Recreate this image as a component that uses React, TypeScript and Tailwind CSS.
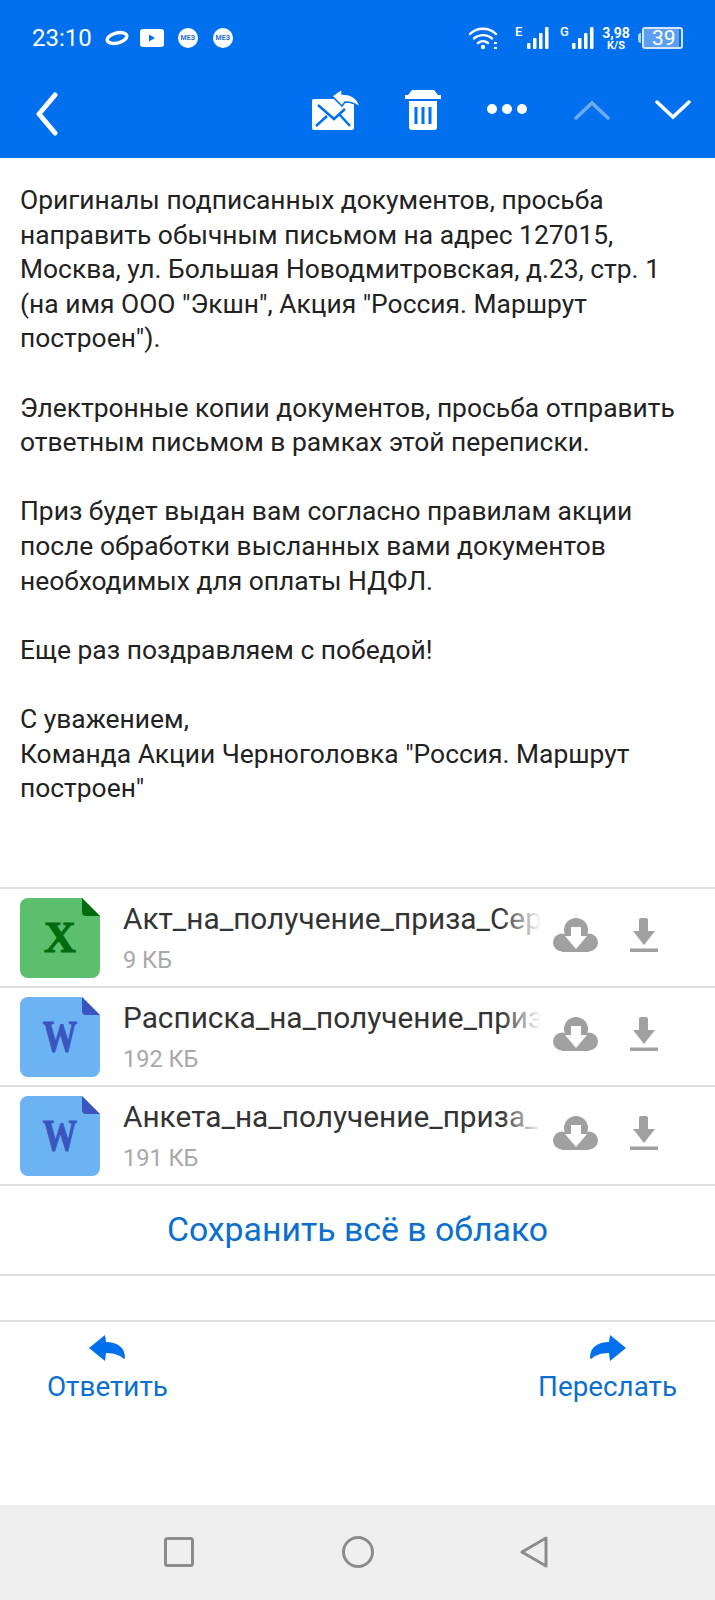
import React from "react";

const body = [
  ["Оригиналы подписанных документов, просьба", "направить обычным письмом на адрес 127015,", "Москва, ул. Большая Новодмитровская, д.23, стр. 1", "(на имя ООО \"Экшн\", Акция \"Россия. Маршрут", "построен\")."],
  ["Электронные копии документов, просьба отправить", "ответным письмом в рамках этой переписки."],
  ["Приз будет выдан вам согласно правилам акции", "после обработки высланных вами документов", "необходимых для оплаты НДФЛ."],
  ["Еще раз поздравляем с победой!"],
  ["С уважением,", "Команда Акции Черноголовка \"Россия. Маршрут", "построен\""],
];

const files = [
  { name: "Акт_на_получение_приза_Сергей", size: "9 КБ", kind: "x" },
  { name: "Расписка_на_получение_приза_Се", size: "192 КБ", kind: "w" },
  { name: "Анкета_на_получение_приза_Серг", size: "191 КБ", kind: "w" },
];

function FileIcon({ kind }: { kind: string }) {
  const bg = kind === "x" ? "#5cbf6e" : "#6bb3f3";
  const dark = kind === "x" ? "#006b0f" : "#3b55bf";
  return (
    <div className="relative h-[80px] w-[80px] shrink-0">
      <svg viewBox="0 0 80 80" className="h-full w-full">
        <path d="M8 0H62L80 18V72a8 8 0 0 1-8 8H8a8 8 0 0 1-8-8V8a8 8 0 0 1 8-8Z" fill={bg} />
        <path d="M62 0L80 18H66a4 4 0 0 1-4-4Z" fill={dark} />
      </svg>
      {kind === "x" ? (
        <span className="absolute inset-0 flex items-center justify-center pt-[1px] font-['Liberation_Serif',serif] text-[44px] leading-none font-bold text-[#006b0f] [-webkit-text-stroke:1px_#006b0f]">X</span>
      ) : (
        <span className="absolute inset-0 flex scale-x-[0.78] items-center justify-center pt-[1px] font-['Liberation_Serif',serif] text-[44px] leading-none font-bold text-[#3b55bf] [-webkit-text-stroke:1px_#3b55bf]">W</span>
      )}
    </div>
  );
}

function CloudIcon() {
  return (
    <svg viewBox="0 0 45 34" className="h-[34px] w-[45px]">
      <circle cx="9" cy="24.500" r="9" fill="#a0a0a0" />
      <circle cx="36" cy="24.500" r="9" fill="#a0a0a0" />
      <circle cx="23" cy="12" r="12" fill="#a0a0a0" />
      <rect x="9" y="16" width="27" height="18" fill="#a0a0a0" />
      <path d="M18 9H28V18H34L23 31L12 18H18Z" fill="#fff" />
    </svg>
  );
}

function SaveIcon() {
  return (
    <svg viewBox="0 0 28 34" className="h-[34px] w-[28px]">
      <path d="M9 2a2 2 0 0 1 2-2h5a2 2 0 0 1 2 2V13H25L14 27L3 13H9Z" fill="#a0a0a0" />
      <rect x="0" y="30.500" width="28" height="3.500" fill="#a0a0a0" />
    </svg>
  );
}

function ReplyIcon({ flip }: { flip?: boolean }) {
  return (
    <svg viewBox="0 0 36 26" className={`h-[26px] w-[36px] ${flip ? "-scale-x-100" : ""}`}>
      <path d="M16 0L17 7C28 7 36 12 36 23L35 24C32 21 26 18 17 18L16 26L0 13Z" fill="#0070ee" />
    </svg>
  );
}

function Signal({ letter, cls }: { letter: string; cls: string }) {
  return (
    <div className={`flex items-start ${cls}`}>
      <span className="mt-[-2px] w-[9px] text-[13px] leading-[14px] font-medium">{letter}</span>
      <svg viewBox="0 0 22 22" className="ml-[3px] h-[22px] w-[22px]">
        <rect x="0" y="16" width="3.500" height="6" rx="1" fill="#fff" />
        <rect x="6" y="11" width="3.500" height="11" rx="1" fill="#fff" />
        <rect x="12" y="6" width="3.500" height="16" rx="1" fill="#fff" />
        <rect x="18" y="0" width="3.500" height="22" rx="1" fill="#fff" />
      </svg>
    </div>
  );
}

function StatusBar() {
  return (
    <div className="flex h-[70px] items-center justify-between pt-[6px] pr-[32px] pl-[32px] text-white">
      <div className="flex items-center">
        <span className="text-[24px]">23:10</span>
        <svg viewBox="0 0 24 16" className="ml-[13px] h-[16px] w-[24px]">
          <ellipse cx="12" cy="8" rx="10" ry="5" transform="rotate(-14 12 8)" fill="none" stroke="#fff" strokeWidth="3.500" />
        </svg>
        <svg viewBox="0 0 24 18" className="ml-[11px] h-[18px] w-[24px]">
          <rect width="24" height="18" rx="3" fill="#fff" />
          <path d="M9 5.500L15 9L9 12.500Z" fill="#0070ee" />
        </svg>
        <div className="ml-[14px] flex h-[20px] w-[20px] items-center justify-center rounded-full bg-white text-[7px] font-bold text-[#2a6fd0]">МЕЗ</div>
        <div className="ml-[15px] flex h-[20px] w-[20px] items-center justify-center rounded-full bg-white text-[7px] font-bold text-[#2a6fd0]">МЕЗ</div>
      </div>
      <div className="flex items-center">
        <svg viewBox="0 0 30 24" className="h-[24px] w-[30px]">
          <path d="M1 8C8 1 20 1 27 8M5 12.500C10 8 18 8 23 12.500M9 17C12 14.500 16 14.500 19 17" fill="none" stroke="#fff" strokeWidth="2.400" strokeLinecap="round" />
          <circle cx="14" cy="21" r="2.200" fill="#fff" />
          <rect x="25" y="16" width="3" height="2" fill="#fff" />
          <rect x="25" y="21" width="3" height="2" fill="#fff" />
        </svg>
        <Signal letter="E" cls="ml-[16px]" />
        <Signal letter="G" cls="ml-[11px]" />
        <div className="ml-[8px] flex w-[28px] flex-col items-center text-[14px] leading-[14px] font-bold">
          <span>3,98</span>
          <span className="text-[11px] leading-[11px]">K/S</span>
        </div>
        <div className="ml-[8px] h-[10px] w-[3px] rounded-l-sm bg-white/70" />
        <div className="relative ml-[1px] flex h-[22px] w-[41px] items-center overflow-hidden rounded-[3px] border-2 border-[#d5e6fb] text-[21px]">
          <div className="h-full w-[35px] bg-[#5c9ff2]" />
          <span className="absolute left-[8px] leading-none">39</span>
        </div>
      </div>
    </div>
  );
}

function Toolbar() {
  return (
    <div className="flex h-[88px] items-start pt-[20px]">
      <svg viewBox="0 0 24 44" className="mt-[2px] ml-[35px] h-[44px] w-[24px]">
        <path d="M20 3L4 22L20 41" fill="none" stroke="#fff" strokeWidth="5" strokeLinecap="round" strokeLinejoin="round" />
      </svg>
      <svg viewBox="0 0 48 42" className="mt-[-1px] ml-[253px] h-[42px] w-[48px]">
        <rect x="0" y="10" width="42" height="31" rx="2" fill="#fff" />
        <path d="M6 16L22 30L33 20M4 37L15 27M28 26L38 37" fill="none" stroke="#0070ee" strokeWidth="2.500" />
        <path d="M20 7L30 0V5C40 5 47 10 48 19C44 14 38 13 33 13L30 17Z" fill="#fff" stroke="#0070ee" strokeWidth="1.500" />
      </svg>
      <svg viewBox="0 0 36 40" className="ml-[45px] h-[40px] w-[36px]">
        <path d="M7 0H29L33 5H36V9H0V5H3Z" fill="#fff" />
        <path d="M4 11H32V37a3 3 0 0 1-3 3H7a3 3 0 0 1-3-3Z" fill="#fff" />
        <path d="M11 17V34M18 17V34M25 17V34" stroke="#0070ee" strokeWidth="3" />
      </svg>
      <div className="mt-[14px] ml-[46px] flex gap-[5px]">
        <div className="h-[10px] w-[10px] rounded-full bg-white" />
        <div className="h-[10px] w-[10px] rounded-full bg-white" />
        <div className="h-[10px] w-[10px] rounded-full bg-white" />
      </div>
      <svg viewBox="0 0 36 20" className="mt-[10px] ml-[47px] h-[20px] w-[36px]">
        <path d="M2 18L18 3L34 18" fill="none" stroke="#6fa9f3" strokeWidth="3.500" strokeLinecap="round" />
      </svg>
      <svg viewBox="0 0 36 20" className="mt-[10px] ml-[45px] h-[20px] w-[36px]">
        <path d="M2 2L18 17L34 2" fill="none" stroke="#fff" strokeWidth="3.500" strokeLinecap="round" />
      </svg>
    </div>
  );
}

function AttachmentRow({ name, size, kind }: { name: string; size: string; kind: string }) {
  return (
    <div className="flex h-[99px] items-center border-b-2 border-[#dfdfdf] pl-[20px]">
      <FileIcon kind={kind} />
      <div className="relative ml-[23px] w-[418px] overflow-hidden">
        <div className="text-[29.800px] leading-[34px] whitespace-nowrap text-[#333]">{name}</div>
        <div className="mt-[10px] text-[23.500px] leading-[28px] text-[#a8a8a8]">{size}</div>
        <div className="absolute top-0 right-0 h-[34px] w-[40px] bg-gradient-to-r from-transparent to-white" />
      </div>
      <div className="mb-[6px] ml-[12px] flex items-center">
        <CloudIcon />
        <div className="ml-[32px]">
          <SaveIcon />
        </div>
      </div>
    </div>
  );
}

export default function App() {
  return (
    <div className="flex h-[1600px] w-[715px] flex-col overflow-hidden bg-white font-['Roboto',sans-serif]">
      <div className="bg-[#0070ee]">
        <StatusBar />
        <Toolbar />
      </div>

      <div className="h-[729px] px-[20px] pt-[25px] text-[26.400px] leading-[34.600px] text-[#222]">
        {body.map((para, i) => (
          <div key={i} className="mb-[34.600px]">
            {para.map((l) => (
              <div key={l} className="whitespace-nowrap">{l}</div>
            ))}
          </div>
        ))}
      </div>

      <div className="border-t-2 border-[#dfdfdf]">
        {files.map((f) => (
          <AttachmentRow key={f.name} {...f} />
        ))}
      </div>

      <div className="flex h-[90px] items-center justify-center border-b-2 border-[#dfdfdf] text-[33.800px] text-[#0a6fd0]">
        Сохранить всё в облако
      </div>

      <div className="h-[46px] border-b-2 border-[#dfdfdf]" />

      <div className="flex h-[183px] justify-between pt-[13px] pr-[38px] pl-[47px] text-[27.800px] leading-[34px] text-[#0a6fd0]">
        <div className="flex flex-col items-center">
          <ReplyIcon />
          <span className="mt-[9px]">Ответить</span>
        </div>
        <div className="flex flex-col items-center">
          <ReplyIcon flip />
          <span className="mt-[9px]">Переслать</span>
        </div>
      </div>

      <div className="flex flex-1 items-center bg-[#efefef] pb-[2px]">
        <svg viewBox="0 0 30 30" className="ml-[164px] h-[30px] w-[30px]">
          <rect x="1.500" y="1.500" width="27" height="27" rx="2" fill="none" stroke="#8c8c8c" strokeWidth="3" />
        </svg>
        <svg viewBox="0 0 32 32" className="ml-[148px] h-[32px] w-[32px]">
          <circle cx="16" cy="16" r="14.500" fill="none" stroke="#8c8c8c" strokeWidth="3" />
        </svg>
        <svg viewBox="0 0 28 32" className="ml-[146px] h-[32px] w-[28px]">
          <path d="M26 2V30L2 16Z" fill="none" stroke="#8c8c8c" strokeWidth="3" strokeLinejoin="round" />
        </svg>
      </div>
    </div>
  );
}
